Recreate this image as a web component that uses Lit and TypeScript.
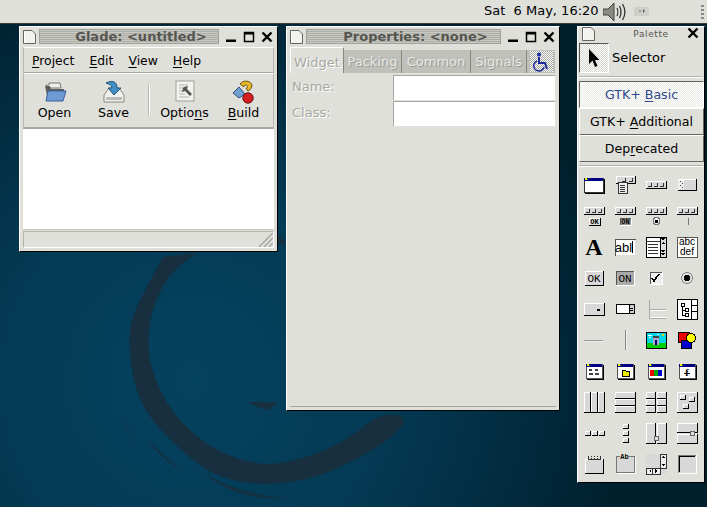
import { LitElement, html, css, svg } from 'lit';
import { customElement } from 'lit/decorators.js';

// 24x24 palette glyph helpers, all drawn on whole pixels
const bevel = (x: number, y: number, w: number, h: number, fill = '#d8d8d8') => svg`
  <rect x=${x} y=${y} width=${w} height=${h} fill=${fill}/>
  <path d="M${x} ${y + h}V${y}H${x + w}" fill="none" stroke="#fff"/>
  <path d="M${x + w} ${y}V${y + h}H${x}" fill="none" stroke="#000"/>`;

const sunken = (x: number, y: number, w: number, h: number, fill = '#d8d8d8') => svg`
  <rect x=${x} y=${y} width=${w} height=${h} fill=${fill}/>
  <path d="M${x} ${y + h}V${y}H${x + w}" fill="none" stroke="#555"/>
  <path d="M${x + w} ${y}V${y + h}H${x}" fill="none" stroke="#fff"/>`;

const bar = (y: number) => svg`
  ${bevel(2, y, 20, 7)}
  <path d="M7 ${y + 2}V${y + 5}H4M13 ${y + 2}V${y + 5}H10M19 ${y + 2}V${y + 5}H16" fill="none" stroke="#333"/>`;

const win = (inner: unknown) => svg`
  <rect x="4" y="5" width="16" height="14" fill="#fff" stroke="#555"/>
  <path d="M21 6V20H5" fill="none" stroke="#000"/>
  <rect x="4" y="5" width="16" height="3" fill="#000080"/>
  <rect x="5" y="5" width="2" height="2" fill="#ff0"/>
  <rect x="7" y="6" width="1" height="1" fill="#0c0"/>
  ${inner}`;

const label = (x: number, y: number, size: number, text: string, font = "'Liberation Mono', monospace", weight = '700') => svg`
  <text x=${x} y=${y} font-family=${font} font-size=${size} font-weight=${weight} text-anchor="middle" fill="#000">${text}</text>`;

const palette = [
  svg`<rect x="2" y="5" width="19" height="14" fill="#fff" stroke="#333"/><path d="M22 6V20H3" fill="none" stroke="#000"/><rect x="2" y="5" width="19" height="3" fill="#000080"/><rect x="3" y="5" width="2" height="2" fill="#ff0"/><rect x="5" y="6" width="1" height="1" fill="#0c0"/>`,
  svg`${bevel(3, 3, 19, 7)}<path d="M12 5V8H9M19 5V8H16" fill="none" stroke="#333"/><rect x="5" y="9" width="9" height="11" fill="#eee" stroke="#333"/><path d="M7 12H12M7 14H12M7 16H12M7 18H12" stroke="#333"/>`,
  svg`${bar(8)}`,
  svg`${bevel(3, 6, 18, 11)}<rect x="3" y="7" width="6" height="9" fill="#eee"/><path d="M5 8V9M7 10V11M5 12V13M7 14V15" stroke="#444"/>`,
  svg`${bar(3)}${bevel(7, 14, 11, 7, '#ddd')}${label(12.5, 20, 7, 'OK')}`,
  svg`${bar(3)}${sunken(7, 14, 11, 7, '#999')}${label(12.5, 20, 7, 'ON')}`,
  svg`${bar(3)}<circle cx="12.5" cy="17" r="3.5" fill="#eee" stroke="#777"/><rect x="11" y="16" width="3" height="3" fill="#000"/>`,
  svg`${bar(3)}<path d="M13.5 14V21" stroke="#777"/>`,
  svg`${label(12, 20, 24, 'A', "'Liberation Serif', serif")}`,
  svg`<rect x="2" y="4" width="20" height="16" fill="#fff" stroke="#555"/><path d="M22 5V20H3" fill="none" stroke="#ddd"/>${label(10.5, 17, 13, 'abl', "'Liberation Sans', sans-serif", '400')}<path d="M19 6V18" stroke="#000"/>`,
  svg`<rect x="2" y="2" width="20" height="20" fill="#fff" stroke="#000"/><rect x="16" y="2" width="6" height="20" fill="#ddd" stroke="#000"/><path d="M16 6H2M4 9H14M4 12H14M4 15H14M4 18H14" stroke="#333"/><path d="M17 3H21L19 6ZM17 9L19 7L21 9ZM17 15H21L19 18ZM17 18H21L19 21Z" fill="#000"/>`,
  svg`<rect x="2" y="2" width="20" height="20" fill="#fff" stroke="#555"/>${label(12, 10, 10, 'abc', "'Liberation Sans', sans-serif", '400')}${label(12, 20, 10, 'def', "'Liberation Sans', sans-serif", '400')}`,
  svg`${bevel(3, 5, 18, 14)}${label(12, 16, 11, 'OK', "'Liberation Mono', monospace", '400')}`,
  svg`${sunken(3, 5, 18, 14, '#aaa')}${label(12, 16, 11, 'ON', "'Liberation Mono', monospace", '400')}`,
  svg`${sunken(6, 6, 12, 12, '#eee')}<path d="M8 12L10 15L15 8" fill="none" stroke="#000" stroke-width="1.6"/>`,
  svg`<circle cx="12" cy="12" r="5.5" fill="#ddd" stroke="#888"/><circle cx="12" cy="12" r="3" fill="#000"/>`,
  svg`${bevel(2, 6, 20, 12)}<rect x="15" y="12" width="3" height="2" fill="#000"/>`,
  svg`<rect x="3" y="7" width="18" height="9" fill="#fff" stroke="#000"/><rect x="16" y="7" width="5" height="9" fill="#ccc" stroke="#000"/><path d="M17 11H20M17 13H20" stroke="#000"/>`,
  svg`<path d="M5 3V21M5 12H22M5 21H22" stroke="#aaa"/><path d="M6 13H22M6 20H22" stroke="#fff"/>`,
  svg`<rect x="2" y="2" width="20" height="20" fill="#fff" stroke="#000"/><path d="M16 2V22M16 8H22M16 14H22" stroke="#000"/><rect x="6" y="6" width="3" height="3" fill="#fff" stroke="#000"/><rect x="10" y="11" width="3" height="3" fill="#fff" stroke="#000"/><rect x="10" y="16" width="3" height="3" fill="#fff" stroke="#000"/><path d="M7 9V18H10M7 13H10" stroke="#000" fill="none"/>`,
  svg`<path d="M2 12H21" stroke="#999"/><path d="M2 13H21" stroke="#eee"/>`,
  svg`<path d="M12 2V22" stroke="#888"/><path d="M13 2V22" stroke="#eee"/>`,
  svg`<rect x="2" y="4" width="20" height="16" fill="#00d8e8"/><rect x="2" y="15" width="20" height="5" fill="#0c0"/><rect x="9" y="10" width="6" height="7" fill="#aac"/><rect x="9" y="8" width="6" height="2" fill="#444"/><rect x="11" y="12" width="2" height="5" fill="#006"/><circle cx="19" cy="7" r="1.5" fill="#fc0"/><path d="M4 7H8M5 9H7M13 6H15" stroke="#fff"/><rect x="2" y="4" width="20" height="16" fill="none" stroke="#000"/>`,
  svg`<rect x="3" y="4" width="11" height="10" fill="#e00" stroke="#000"/><rect x="6" y="12" width="10" height="8" fill="#00c" stroke="#000"/><circle cx="16" cy="10" r="4.5" fill="#ff0" stroke="#000"/>`,
  svg`${win(svg`<path d="M7 11H10M13 11H16M7 15H11M13 15H17" stroke="#444" stroke-width="1.5"/>`)}`,
  svg`${win(svg`<path d="M9 11H12L13 12H16V17H9Z" fill="#ee0" stroke="#000"/>`)}`,
  svg`${win(svg`<rect x="6" y="11" width="4" height="6" fill="#e00"/><rect x="10" y="11" width="4" height="6" fill="#0a0"/><rect x="14" y="11" width="4" height="6" fill="#00c"/>`)}`,
  svg`${win(svg`${label(12, 17, 10, 'f', "'Liberation Serif', serif")}<path d="M9 14H15" stroke="#000"/>`)}`,
  svg`${bevel(2, 2, 6, 20)}${bevel(9, 2, 6, 20)}${bevel(16, 2, 6, 20)}`,
  svg`${bevel(2, 2, 20, 6)}${bevel(2, 9, 20, 6)}${bevel(2, 16, 20, 6)}`,
  svg`${bevel(2, 2, 9, 6)}${bevel(13, 2, 9, 6)}${bevel(2, 9, 9, 6)}${bevel(13, 9, 9, 6)}${bevel(2, 16, 9, 6)}${bevel(13, 16, 9, 6)}`,
  svg`${bevel(2, 2, 20, 20)}${bevel(5, 5, 5, 4)}${bevel(14, 7, 5, 4)}${bevel(8, 14, 5, 4)}`,
  svg`${bevel(3, 10, 5, 4)}${bevel(10, 10, 5, 4)}${bevel(17, 10, 5, 4)}`,
  svg`${bevel(10, 3, 5, 4)}${bevel(10, 10, 5, 4)}${bevel(10, 17, 5, 4)}`,
  svg`${bevel(2, 2, 9, 20)}${bevel(13, 2, 9, 20)}<rect x="10" y="15" width="4" height="4" fill="#ddd" stroke="#666"/>`,
  svg`${bevel(2, 2, 20, 9)}${bevel(2, 13, 20, 9)}<rect x="15" y="10" width="4" height="4" fill="#ddd" stroke="#666"/>`,
  svg`${bevel(3, 7, 18, 14)}<path d="M6 4V7H18V4" fill="none" stroke="#333"/><path d="M9 4V7M12 4V7M15 4V7" stroke="#333" stroke-dasharray="1 1"/>`,
  svg`<rect x="3" y="4" width="18" height="16" fill="#d8d8d8" stroke="#777"/><path d="M4 21H22V5" fill="none" stroke="#fff"/><rect x="7" y="1" width="9" height="6" fill="#e0e0db"/>${label(11.5, 7, 7, 'Ab')}`,
  svg`<rect x="2" y="2" width="20" height="20" fill="#d8d8d8"/><rect x="16" y="2" width="6" height="14" fill="#eee" stroke="#333"/><rect x="2" y="16" width="14" height="6" fill="#eee" stroke="#333"/><path d="M17 6H21L19 4ZM17 12H21L19 14ZM5 19L7 17V21ZM13 19L11 17V21Z" fill="#000"/><path d="M8 16V22" stroke="#333"/>`,
  svg`<rect x="3" y="3" width="18" height="18" fill="#d8d8d8"/><path d="M3 21V3H21" fill="none" stroke="#777"/><path d="M4 20V4H20" fill="none" stroke="#000"/><path d="M21 3V21H3" fill="none" stroke="#fff"/>`,
];

const closeIcon = svg`<path d="M1.5 1.5L10.5 10.5M10.5 1.5L1.5 10.5" stroke="#000" stroke-width="2.4"/>`;
const pageIcon = svg`<path d="M.5 .5H9L12.5 4V13.5H.5Z" fill="#f2f2ee" stroke="#66665f"/><path d="M1.5 13V1.5" stroke="#fff"/>`;

// debian swirl traced from the wallpaper, smoothed through point midpoints
const smooth = (pts: number[][]) => {
  let d = `M${pts[0][0]} ${pts[0][1]}`;
  for (let i = 1; i < pts.length - 1; i++) {
    const mx = (pts[i][0] + pts[i + 1][0]) / 2;
    const my = (pts[i][1] + pts[i + 1][1]) / 2;
    d += `Q${pts[i][0]} ${pts[i][1]} ${mx} ${my}`;
  }
  const last = pts[pts.length - 1];
  return `${d}L${last[0]} ${last[1]}Z`;
};

const ring = smooth([
  [163, 257], [141, 297], [130, 323], [129, 353], [137, 397], [159, 430], [204, 470], [237, 482], [274, 485],
  [315, 478], [356, 460], [393, 437], [409, 417], [381, 413], [356, 433], [333, 447], [304, 458], [267, 466],
  [230, 457], [200, 440], [170, 410], [154, 377], [147, 347], [152, 307], [170, 273], [196, 253],
]);

@customElement('app-root')
export class AppRoot extends LitElement {
  static styles = css`
    :host {
      display: block;
      position: relative;
      width: 707px;
      height: 507px;
      overflow: hidden;
      font-family: 'DejaVu Sans', sans-serif;
      font-size: 13px;
      color: #000;
      background: radial-gradient(circle 430px at 193px 380px, #05425f 0%, #043a54 45%, #022c40 75%, #01202e 100%);
    }

    .swirl {
      position: absolute;
      inset: 0;
    }

    .panel {
      position: relative;
      height: 23px;
      background: #e0e0db;
      border-bottom: 1px solid #3c3c38;
      display: flex;
      align-items: center;
      padding-left: 484px;
    }

    .clock {
      width: 112px;
      flex: none;
      white-space: pre;
      line-height: 20px;
      padding-bottom: 2px;
    }

    .speaker {
      margin-left: 7px;
      flex: none;
    }

    .plug {
      margin-left: 8px;
      flex: none;
    }

    .grip {
      margin-left: 52px;
      flex: none;
      width: 3px;
      height: 14px;
      background: repeating-linear-gradient(#888 0 2px, #e0e0db 2px 4px);
    }

    .window {
      position: absolute;
      box-sizing: border-box;
      background: #e0e0db;
      border-top: 1px solid #fff;
      border-left: 1px solid #fff;
      border-right: 1px solid #000;
      border-bottom: 1px solid #000;
      padding: 1px 3px 3px 3px;
      display: flex;
      flex-direction: column;
    }

    .glade { left: 19px; top: 26px; width: 259px; height: 226px; }
    .props { left: 286px; top: 26px; width: 274px; height: 385px; }
    .pal { left: 577px; top: 26px; width: 128px; height: 457px; padding: 0 1px 0 1px; }

    .titlebar {
      height: 17px;
      display: flex;
      align-items: center;
      gap: 3px;
      flex: none;
    }

    .titlebar svg { flex: none; display: block; }

    .grooves {
      flex: 1;
      height: 15px;
      box-sizing: border-box;
      border: 1px solid #a0a09b;
      background: repeating-linear-gradient(#c9c9c4 0 1px, #aeaea9 1px 2px);
      text-align: center;
      font-weight: 700;
      line-height: 14px;
      color: #55554f;
      white-space: nowrap;
      overflow: hidden;
      padding-left: 24px;
    }

    .controls {
      display: flex;
      gap: 6px;
      margin-left: 3px;
      margin-right: 1px;
    }

    .menubar {
      flex: none;
      display: flex;
      gap: 15px;
      height: 26px;
      align-items: center;
      padding-left: 8px;
      margin-top: 2px;
      font-size: 12.4px;
      border: 1px solid #b8b8b3;
      border-bottom-color: #a8a8a3;
      border-top-color: #fff;
      box-sizing: border-box;
    }

    .toolbar {
      flex: none;
      display: flex;
      height: 56px;
      box-sizing: border-box;
      padding-left: 1px;
      border: 1px solid #b8b8b3;
      border-top-color: #fff;
      border-bottom: 2px solid #a8a8a3;
    }

    .tool {
      width: 59px;
      display: flex;
      flex-direction: column;
      align-items: center;
      padding-top: 6px;
      box-sizing: border-box;
    }

    .tool svg { display: block; height: 24px; }
    .tool span { margin-top: 1px; line-height: 15px; font-size: 12.6px; }

    .vsep {
      margin: 11px 5px 0 5px;
      width: 1px;
      height: 30px;
      background: #b4b4af;
      border-right: 1px solid #fff;
    }

    .canvas {
      flex: none;
      height: 100px;
      background: #fff;
      border-bottom: 1px solid #c8c8c3;
    }

    .status {
      flex: 1;
      position: relative;
      margin-top: 1px;
      border: 1px solid #b4b4af;
      border-bottom-color: #fff;
      border-right-color: #fff;
    }

    .resize {
      position: absolute;
      right: 0;
      bottom: 0;
    }

    .tabs {
      flex: none;
      display: flex;
      align-items: flex-end;
      height: 26px;
      margin-top: 2px;
    }

    .tab {
      height: 23px;
      line-height: 23px;
      background: #c0c0bb;
      border-right: 1px solid #88887f;
      text-align: center;
      color: #e8e8e3;
      text-shadow: 1px 1px 0 #9a9a95;
      box-sizing: border-box;
    }

    .tab.on {
      height: 26px;
      line-height: 29px;
      background: #e0e0db;
      color: #a8a8a3;
      text-shadow: 1px 1px 0 #fff;
      border-top: 1px solid #fff;
      border-left: 1px solid #fff;
    }

    .tab.access {
      display: flex;
      align-items: center;
      justify-content: center;
      border-right: none;
    }

    .dither {
      width: 23px;
      height: 21px;
      display: flex;
      align-items: center;
      justify-content: center;
      background-color: #fff;
      background-image: conic-gradient(#a8a8a3 25%, #fff 0 50%, #a8a8a3 0 75%, #fff 0);
      background-size: 2px 2px;
    }

    .form {
      flex: 1;
      display: grid;
      grid-template-columns: 102px 1fr;
      grid-auto-rows: 26px;
      padding: 2px 1px 0 1px;
      align-content: start;
      color: #a8a8a3;
      text-shadow: 1px 1px 0 #fff;
    }

    .form label { line-height: 24px; padding-left: 1px; }

    .entry {
      height: 25px;
      box-sizing: border-box;
      background: #fff;
      border-left: 1px solid #a8a8a3;
      border-top: 1px solid #a8a8a3;
    }

    .props-foot {
      flex: none;
      height: 1px;
      background: #a8a8a3;
    }

    .pal-title {
      flex: 1;
      text-align: center;
      font-size: 9px;
      letter-spacing: 0.6px;
      color: #55554f;
      padding: 2px 0 0 20px;
    }

    .pal .titlebar {
      height: 15px;
      padding-left: 3px;
      padding-right: 4px;
      align-items: flex-start;
    }

    .selector {
      flex: none;
      display: flex;
      align-items: center;
      gap: 3px;
      height: 31px;
    }

    .selbox {
      width: 30px;
      height: 30px;
      box-sizing: border-box;
      border: 1px solid #fff;
      border-top-color: #55554f;
      border-left-color: #55554f;
      background-color: #f2f2ef;
      background-image: conic-gradient(#d8d8d3 25%, #fff 0 50%, #d8d8d3 0 75%, #fff 0);
      background-size: 2px 2px;
      display: flex;
      align-items: center;
      justify-content: center;
    }

    .hsep {
      flex: none;
      height: 1px;
      background: #b4b4af;
      border-bottom: 1px solid #fff;
      margin: 3px 0 3px 0;
    }

    .group {
      height: 27px;
      box-sizing: border-box;
      text-align: center;
      line-height: 26px;
      font-size: 12.6px;
      border: 1px solid #fff;
      border-right-color: #66665f;
      border-bottom-color: #66665f;
      width: 125px;
      flex: none;
    }

    .group.on {
      border-color: #66665f #fff #fff #66665f;
      color: #2f4a8c;
      background-image: conic-gradient(#e8e8e4 25%, #fff 0 50%, #e8e8e4 0 75%, #fff 0);
      background-size: 2px 2px;
    }

    .grid {
      display: grid;
      grid-template-columns: repeat(4, 31px);
      grid-auto-rows: 31px;
    }

    .cell svg {
      width: 31px;
      height: 31px;
      display: block;
      shape-rendering: crispEdges;
    }

    u { text-underline-offset: 2px; }
  `;

  private renderControls() {
    return html`<div class="controls">
      <svg width="12" height="12" viewBox="0 0 12 12"><rect x="1" y="8.5" width="10" height="2.5" fill="#000"/></svg>
      <svg width="12" height="12" viewBox="0 0 12 12"><rect x="1.5" y="1.5" width="9" height="9" fill="none" stroke="#000" stroke-width="1.5"/><rect x="1" y="1" width="10" height="2.5" fill="#000"/></svg>
      <svg width="12" height="12" viewBox="0 0 12 12">${closeIcon}</svg>
    </div>`;
  }

  private renderTitle(text: string) {
    return html`<div class="titlebar">
      <svg width="13" height="14" viewBox="0 0 13 14">${pageIcon}</svg>
      <div class="grooves">${text}</div>
      ${this.renderControls()}
    </div>`;
  }

  private renderGlade() {
    return html`<div class="window glade">
      ${this.renderTitle('Glade: <untitled>')}
      <div class="menubar">
        <span><u>P</u>roject</span><span><u>E</u>dit</span><span><u>V</u>iew</span><span><u>H</u>elp</span>
      </div>
      <div class="toolbar">
        <div class="tool">
          <svg width="24" viewBox="0 0 24 24">
            <path d="M3 5H6V3H17L18 8H4Z" fill="#eee" stroke="#777"/>
            <path d="M2 6L5 20H20L21 9H8L7 6Z" fill="#5d5d58"/>
            <path d="M5 11H23L20 21H3Z" fill="#6f9bd4" stroke="#3a5f98"/>
          </svg>
          <span>Open</span>
        </div>
        <div class="tool">
          <svg width="24" viewBox="0 0 24 24">
            <path d="M7 8L2 15V22H22V15L17 8Z" fill="#f0f0ec" stroke="#88887f"/>
            <rect x="4" y="17" width="16" height="3" fill="#bbb"/>
            <path d="M4 3C10 0 15 1 15 8H19L12 15L6 8H10C10 5 7 4 4 3Z" fill="#3f8fc4" stroke="#24587f"/>
          </svg>
          <span>Save</span>
        </div>
        <div class="vsep"></div>
        <div class="tool">
          <svg width="24" viewBox="0 0 24 24">
            <rect x="3" y="1" width="18" height="20" fill="#f2f2ee" stroke="#a0a09b"/>
            <path d="M6 5H15M6 8H11M6 11H10M6 14H12M6 17H16" stroke="#b0b0ab"/>
            <path d="M11 7L15 6L14 9L19 14L17 16L12 11L9 12L10 8Z" fill="#555"/>
          </svg>
          <span>Optio<u>n</u>s</span>
        </div>
        <div class="tool">
          <svg width="24" viewBox="0 0 24 24">
            <path d="M8 4C11 0 18 0 20 5C20 8 18 10 16 11L14 8C16 8 16 5 14 5C12 5 12 6 12 7Z" fill="#e8b828" stroke="#6a5210"/>
            <path d="M7 7L13 14L7 18L1 13Z" fill="#6fa0d0" stroke="#2f4f78"/>
            <circle cx="16" cy="18" r="5.2" fill="#d42020" stroke="#6a1010"/>
          </svg>
          <span><u>B</u>uild</span>
        </div>
      </div>
      <div class="canvas"></div>
      <div class="status">
        <svg class="resize" width="16" height="16" viewBox="0 0 16 16">
          <path d="M2 16L16 2M7 16L16 7M12 16L16 12" stroke="#a0a09b" stroke-width="1.2"/>
        </svg>
      </div>
    </div>`;
  }

  private renderProps() {
    return html`<div class="window props">
      ${this.renderTitle('Properties: <none>')}
      <div class="tabs">
        <div class="tab on" style="width:54px">Widget</div>
        <div class="tab" style="width:58px">Packing</div>
        <div class="tab" style="width:69px">Common</div>
        <div class="tab" style="width:56px">Signals</div>
        <div class="tab access" style="width:28px">
          <div class="dither">
            <svg width="18" height="20" viewBox="0 0 18 20">
              <circle cx="7" cy="2.5" r="2" fill="#1c2c9c"/>
              <path d="M7 5V11H13L15 17" fill="none" stroke="#1c2c9c" stroke-width="2"/>
              <path d="M5 9A5.2 5.2 0 1 0 12 15" fill="none" stroke="#1c2c9c" stroke-width="1.5"/>
            </svg>
          </div>
        </div>
      </div>
      <div class="form">
        <label>Name:</label><div class="entry"></div>
        <label>Class:</label><div class="entry"></div>
      </div>
      <div class="props-foot"></div>
    </div>`;
  }

  private renderPalette() {
    return html`<div class="window pal">
      <div class="titlebar">
        <svg width="13" height="14" viewBox="0 0 13 14">${pageIcon}</svg>
        <div class="pal-title">Palette</div>
        <svg width="12" height="12" viewBox="0 0 12 12">${closeIcon}</svg>
      </div>
      <div class="selector">
        <div class="selbox">
          <svg width="12" height="20" viewBox="0 0 12 20"><path d="M1 1V16L4.5 12.5L7 19L9.5 18L7 12H11.5Z" fill="#000"/></svg>
        </div>
        <span>Selector</span>
      </div>
      <div class="hsep"></div>
      <div class="group on">GTK+ <u>B</u>asic</div>
      <div class="group">GTK+ <u>A</u>dditional</div>
      <div class="group">Dep<u>r</u>ecated</div>
      <div class="hsep"></div>
      <div class="grid">
        ${palette.map((g) => html`<div class="cell"><svg viewBox="-3 -3 31 31">${g}</svg></div>`)}
      </div>
    </div>`;
  }

  render() {
    return html`
      <svg class="swirl" width="707" height="507" viewBox="0 0 707 507" fill="#172f3e">
        <path d=${ring}/>
        <path d="M124 420C130 435 138 447 144 453C135 443 127 432 124 420Z"/>
        <path d="M141 432C155 450 170 465 185 472C170 462 155 448 141 432Z"/>
        <path d="M204 473C225 492 255 500 289 498C262 497 230 490 204 473Z"/>
        <path d="M247 402H278L268 410C260 408 252 405 247 402Z"/>
        <path d="M278 236L285 241L284 245L278 243Z"/>
      </svg>
      <div class="panel">
        <span class="clock">Sat  6 May, 16:20</span>
        <svg class="speaker" width="23" height="20" viewBox="0 0 23 20">
          <path d="M0 7H5L11 1V19L5 13H0Z" fill="#8a8a80" stroke="#444"/>
          <path d="M14 6C15 8 15 12 14 14M16.5 4C18.5 8 18.5 12 16.5 16M19.5 2C22.5 7 22.5 13 19.5 18" fill="none" stroke="#333" stroke-width="1.3"/>
        </svg>
        <svg class="plug" width="15" height="9" viewBox="0 0 15 9"><rect width="15" height="9" fill="#cfcfca"/><path d="M5 4H7M9 3H10V5H9" stroke="#666"/></svg>
        <div class="grip"></div>
      </div>
      ${this.renderGlade()} ${this.renderProps()} ${this.renderPalette()}
    `;
  }
}
